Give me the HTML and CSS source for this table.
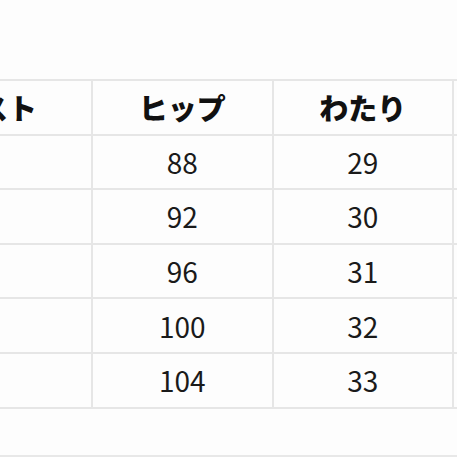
FILE: index.html
```html
<!DOCTYPE html>
<html lang="ja">
<head>
<meta charset="utf-8">
<link rel="stylesheet" href="styles.css">
</head>
<body>
<div class="page">
  <table class="size">
    <colgroup>
      <col class="c-first">
      <col class="c">
      <col class="c">
      <col class="c">
    </colgroup>
    <thead>
      <tr><th>ウエスト</th><th>ヒップ</th><th>わたり</th><th></th></tr>
    </thead>
    <tbody>
      <tr><td></td><td>88</td><td>29</td><td></td></tr>
      <tr><td></td><td>92</td><td>30</td><td></td></tr>
      <tr><td></td><td>96</td><td>31</td><td></td></tr>
      <tr><td></td><td>100</td><td>32</td><td></td></tr>
      <tr><td></td><td>104</td><td>33</td><td></td></tr>
    </tbody>
  </table>
  <div class="rule"></div>
</div>
</body>
</html>
```
FILE: styles.css
```css
html, body {
  margin: 0;
  padding: 0;
  background: #fdfdfd;
}
.page {
  width: 457px;
  height: 457px;
  overflow: hidden;
  position: relative;
  padding-top: 79px;
  box-sizing: border-box;
}
.size {
  border-collapse: collapse;
  table-layout: fixed;
  width: 767px;
  margin-left: -135px;
  font-family: "Noto Sans CJK JP", "Noto Sans", sans-serif;
  color: #111;
}
.c-first { width: 226px; }
.c { width: 180.5px; }
.size th, .size td {
  border: 2px solid #e6e6e6;
  text-align: center;
  padding: 0;
  height: 52.6px;
  line-height: 1;
}
.size th {
  font-size: 29px;
  font-weight: 900;
}
.size td {
  font-size: 28px;
  font-weight: 400;
  color: #1a1a1a;
}
.rule {
  position: absolute;
  left: 0;
  right: 0;
  bottom: 0;
  height: 2px;
  background: #e8e8e8;
}
```
